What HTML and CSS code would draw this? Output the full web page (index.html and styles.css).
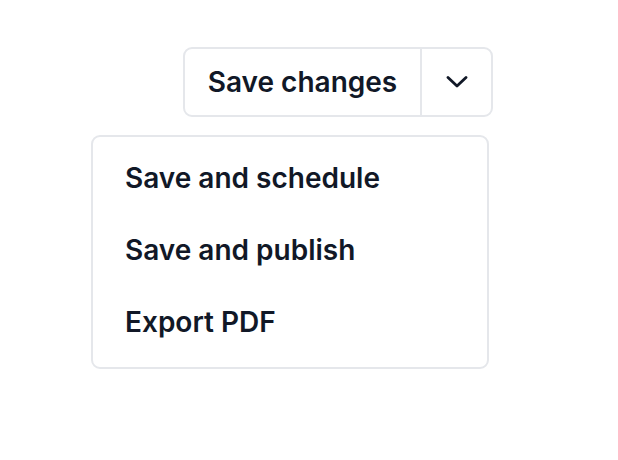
FILE: index.html
```html
<!DOCTYPE html>
<html>
<head>
<meta charset="utf-8">
<link rel="stylesheet" href="styles.css">
</head>
<body>
<div class="page">
  <div class="split">
    <button class="main">Save changes</button>
    <button class="toggle" aria-label="More options">
      <svg width="22" height="12" viewBox="0 0 22 12" fill="none"><path d="M2 1.5 L11 10 L20 1.5" stroke="#111827" stroke-width="2.8" stroke-linecap="round" stroke-linejoin="round"/></svg>
    </button>
  </div>
  <ul class="menu">
    <li class="item">Save and schedule</li>
    <li class="item">Save and publish</li>
    <li class="item">Export PDF</li>
  </ul>
</div>
</body>
</html>
```
FILE: styles.css
```css
html, body {
  margin: 0;
  background: #ffffff;
}
body {
  font-family: Inter, "Liberation Sans", sans-serif;
  color: #111827;
}
.page {
  display: flex;
  flex-direction: column;
  align-items: flex-start;
  padding-top: 47px;
}
.split {
  display: flex;
  margin-left: 183px;
  height: 70px;
  width: 310px;
  box-sizing: border-box;
  border: 2px solid #e5e7eb;
  border-radius: 9px;
  background: #fff;
}
.split button {
  font: inherit;
  color: inherit;
  background: transparent;
  border: 0;
  margin: 0;
  padding: 0;
  display: flex;
  align-items: center;
  justify-content: center;
}
.split .main {
  width: 237px;
  font-size: 28px;
  font-weight: 600;
  border-right: 2px solid #e5e7eb;
}
.split .toggle {
  flex: 1;
}
.menu {
  list-style: none;
  margin: 18px 0 0 91px;
  padding: 5px 0 9px;
  width: 398px;
  box-sizing: border-box;
  border: 2px solid #e5e7eb;
  border-radius: 9px;
}
.item {
  height: 72px;
  display: flex;
  align-items: center;
  padding-left: 32px;
  font-size: 28px;
  font-weight: 600;
}
```
